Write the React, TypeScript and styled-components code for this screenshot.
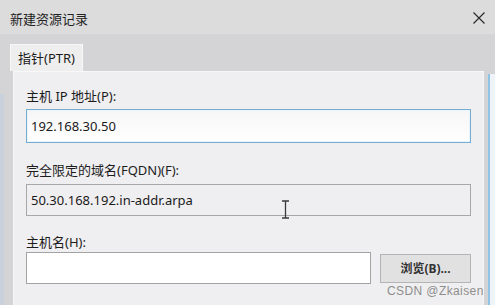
import React from "react";
import styled, { createGlobalStyle } from "styled-components";

const Global = createGlobalStyle`
  html, body { margin: 0; padding: 0; background: #d4d4d6; }
  body { font-family: "Noto Sans", "Noto Sans CJK SC", sans-serif; }
`;

const Window = styled.div`
  position: relative;
  width: 495px;
  height: 305px;
  overflow: hidden;
  display: flex;
  flex-direction: column;
  background: #d4d4d6;
  font-family: "Noto Sans", "Noto Sans CJK SC", sans-serif;
  color: #1a1a1a;
`;

const TitleBar = styled.div`
  height: 34px;
  flex: none;
  display: flex;
  align-items: center;
  justify-content: space-between;
  padding: 0 10px 0 10px;
  background: #dcdcdc;
  box-sizing: border-box;
`;

const Title = styled.span`
  font-size: 13px;
  line-height: 16px;
  color: #222;
  margin-top: 4px;
`;

const CloseBox = styled.div`
  width: 12px;
  height: 12px;
  display: flex;
  margin-top: 2px;
`;

const Body = styled.div`
  flex: 1;
  display: flex;
  min-height: 0;
`;

const LeftEdge = styled.div`
  width: 4px;
  flex: none;
  background: linear-gradient(to bottom, #d4d4d6 0, #d4d4d6 60px, #c9d2dc 60px, #c9d2dc 100%);
`;

const Main = styled.div`
  flex: 1;
  display: flex;
  flex-direction: column;
  padding: 10px 0 0 6px;
  min-width: 0;
`;

const RightEdge = styled.div`
  width: 7px;
  flex: none;
  margin-left: 4px;
  display: flex;
`;

const EdgeLine = styled.div`
  width: 2px;
  margin-top: 40px;
  background: #8fc3e6;
`;

const EdgeFill = styled.div`
  flex: 1;
  margin-top: 40px;
  background: #eef3f8;
`;

const TabRow = styled.div`
  display: flex;
  height: 27px;
  flex: none;
`;

const Tab = styled.div`
  width: 73px;
  box-sizing: border-box;
  display: flex;
  align-items: center;
  padding-left: 7px;
  padding-bottom: 2px;
  font-size: 13px;
  background: #efeeef;
  border: 1px solid #f7f7f7;
  border-bottom: none;
  color: #1a1a1a;
`;

const Panel = styled.div`
  flex: 1;
  margin-left: 3px;
  background: #efeef0;
  border-top: 1px solid #f8f8f8;
  border-left: 1px solid #f6f6f6;
  border-right: 1px solid #f6f6f6;
  padding: 16px 12px 0 12px;
  display: flex;
  flex-direction: column;
`;

const Label = styled.div<{ $gap?: number }>`
  font-size: 13px;
  line-height: 16px;
  color: #1c1c1c;
  margin-top: ${(p) => p.$gap ?? 0}px;
`;

const Field = styled.div<{ $variant: "focus" | "readonly" | "plain"; $gap: number; $h: number }>`
  height: ${(p) => p.$h}px;
  box-sizing: border-box;
  margin-top: ${(p) => p.$gap}px;
  display: flex;
  align-items: center;
  padding-left: 4px;
  font-size: 13px;
  color: #1a1a1a;
  border: 1px solid
    ${(p) => (p.$variant === "focus" ? "#78acd0" : p.$variant === "readonly" ? "#a8a8a8" : "#a3a3a3")};
  background: ${(p) =>
    p.$variant === "focus"
      ? "linear-gradient(#f6f6f6, #ffffff)"
      : p.$variant === "readonly"
      ? "#efeef0"
      : "#ffffff"};
  ${(p) => (p.$variant === "focus" ? "box-shadow: inset 0 0 0 1px #e6f4fb;" : "")}
`;

const HostRow = styled.div`
  display: flex;
  align-items: center;
  gap: 9px;
  margin-top: 2px;
`;

const HostField = styled(Field)`
  flex: 1;
  margin-top: 0;
`;

const Button = styled.div`
  width: 91px;
  height: 29px;
  box-sizing: border-box;
  border: 1px solid #b4b4b4;
  background: #e1e1e2;
  display: flex;
  align-items: center;
  justify-content: center;
  font-size: 12px;
  font-weight: 700;
  color: #333;
`;

const FieldsColumn = styled.div`
  display: flex;
  flex-direction: column;
`;

const Watermark = styled.div`
  position: absolute;
  left: 387px;
  top: 284px;
  font-family: "Liberation Sans", Arial, sans-serif;
  font-size: 12px;
  line-height: 14px;
  color: #8e8e8e;
  letter-spacing: 0.4px;
`;

const Cursor = styled.svg`
  position: absolute;
  left: 281px;
  top: 200px;
`;

export default function App() {
  return (
    <>
      <Global />
      <Window>
        <TitleBar>
          <Title>新建资源记录</Title>
          <CloseBox>
            <svg width="12" height="12" viewBox="0 0 12 12">
              <path d="M0.5 0.5 L11.5 11.5 M11.5 0.5 L0.5 11.5" stroke="#2b2b2b" strokeWidth="1.2" fill="none" />
            </svg>
          </CloseBox>
        </TitleBar>
        <Body>
          <LeftEdge />
          <Main>
            <TabRow>
              <Tab>指针(PTR)</Tab>
            </TabRow>
            <Panel>
              <FieldsColumn>
                <Label>主机 IP 地址(P):</Label>
                <Field $variant="focus" $gap={5} $h={34}>192.168.30.50</Field>
                <Label $gap={19}>完全限定的域名(FQDN)(F):</Label>
                <Field $variant="readonly" $gap={6} $h={32}>50.30.168.192.in-addr.arpa</Field>
                <Label $gap={18}>主机名(H):</Label>
                <HostRow>
                  <HostField $variant="plain" $gap={0} $h={32} />
                  <Button>浏览(B)...</Button>
                </HostRow>
              </FieldsColumn>
            </Panel>
          </Main>
          <RightEdge>
            <EdgeLine />
            <EdgeFill />
          </RightEdge>
        </Body>
        <Cursor width="9" height="19" viewBox="0 0 9 19">
          <path d="M1 1 H8 M4.5 1 V18 M1 18 H8" stroke="#3a3a3a" strokeWidth="1.3" fill="none" />
        </Cursor>
        <Watermark>CSDN @Zkaisen</Watermark>
      </Window>
    </>
  );
}
